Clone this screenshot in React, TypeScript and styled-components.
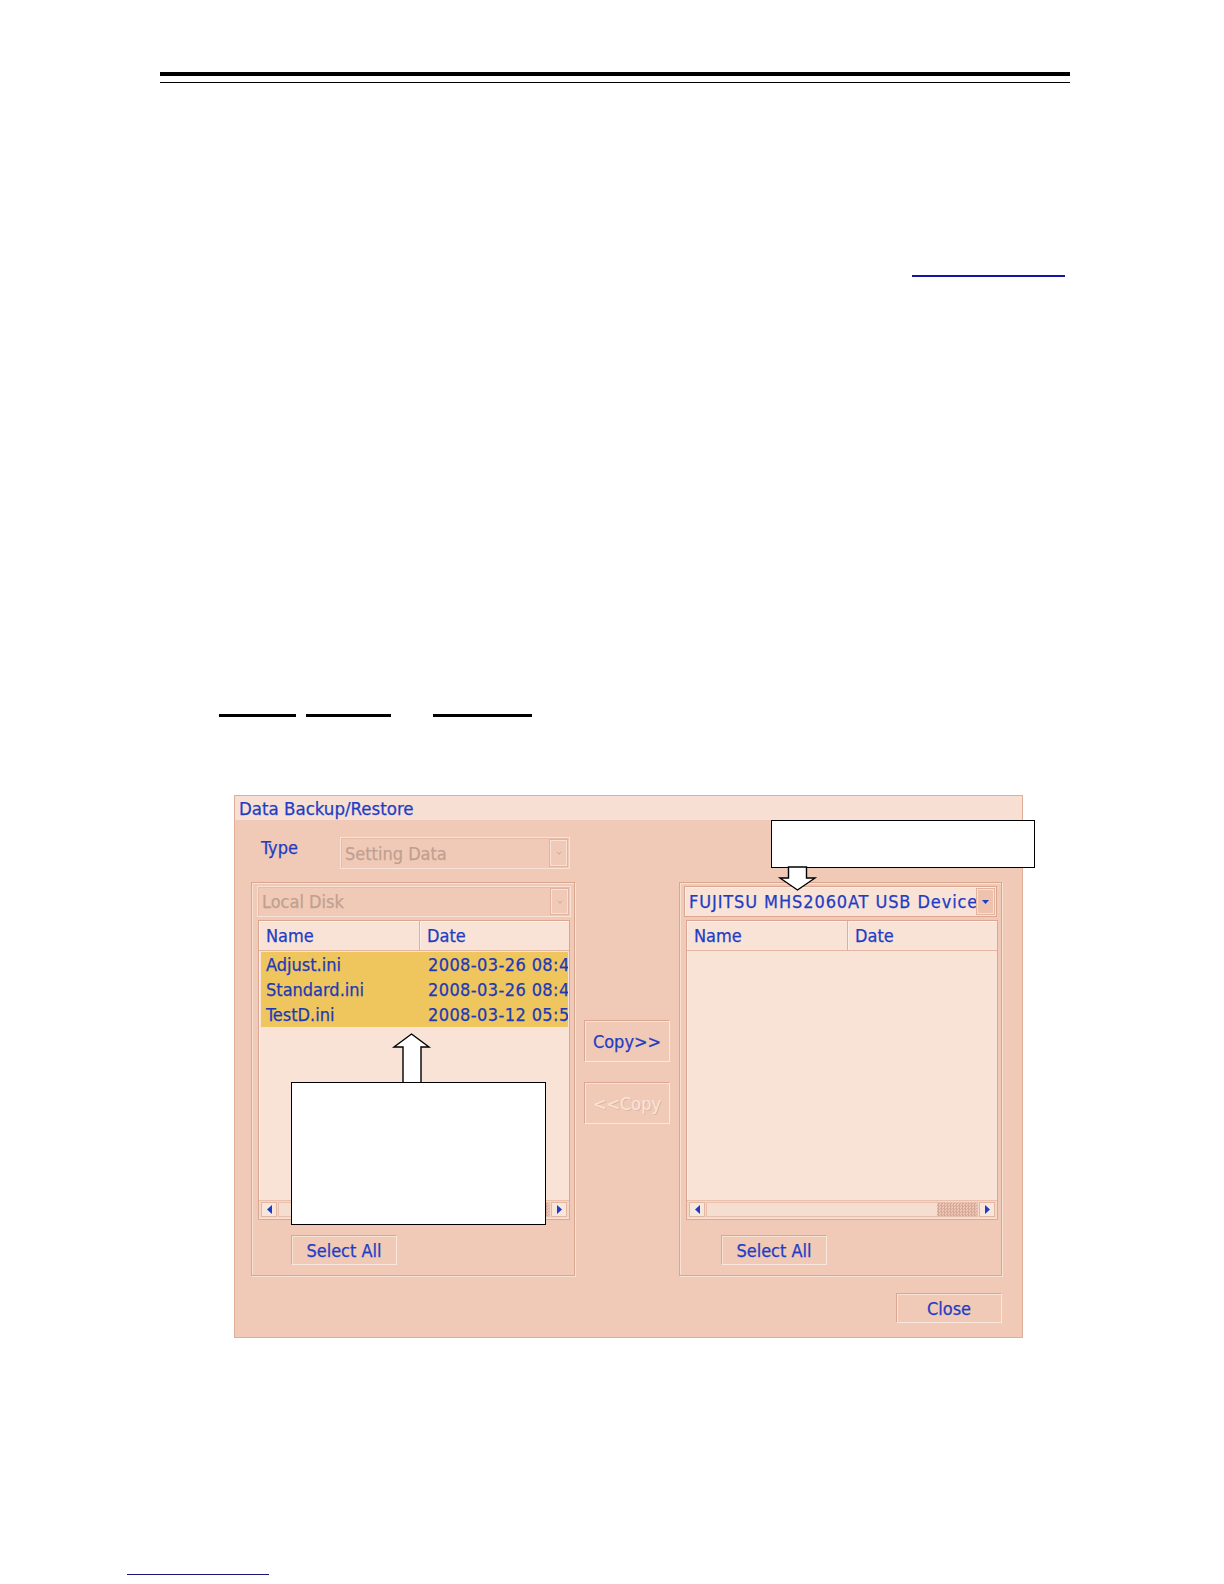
import React from "react";
import styled, { createGlobalStyle } from "styled-components";

const GlobalStyle = createGlobalStyle`
  html, body { margin: 0; padding: 0; background: #ffffff; }
  body { font-family: "DejaVu Sans", "Liberation Sans", sans-serif; }
  * { box-sizing: border-box; }
`;

const BLUE = "#1f3dc4";
const UI_FONT = `"DejaVu Sans Condensed", "DejaVu Sans", "Liberation Sans", sans-serif`;

const Page = styled.div`
  width: 1224px;
  min-height: 1584px;
  display: flex;
  flex-direction: column;
  align-items: flex-start;
  background: #ffffff;
`;

const HeaderRule = styled.div`
  margin: 72px 0 0 160px;
  width: 910px;
  height: 11px;
  border-top: 4px solid #000;
  border-bottom: 1px solid #000;
`;

const LinkLine = styled.div`
  margin: 192px 0 0 912px;
  width: 153px;
  height: 2px;
  background: #1414a6;
`;

const UnderlineRow = styled.div`
  margin-top: 437px;
  padding-left: 219px;
  display: flex;
`;

const Segment = styled.div<{ $w: number; $gap?: number }>`
  width: ${(p) => p.$w}px;
  margin-left: ${(p) => p.$gap ?? 0}px;
  height: 3px;
  background: #000;
`;

const FooterLine = styled.div`
  margin: 236px 0 0 127px;
  width: 142px;
  height: 1px;
  background: #16167c;
`;

const Dialog = styled.div`
  position: relative;
  margin: 78px 0 0 234px;
  width: 789px;
  height: 543px;
  background: #f0cab6;
  border: 1px solid #dfae98;
  display: flex;
  flex-direction: column;
  font-family: ${UI_FONT};
  font-size: 18px;
  color: ${BLUE};
  -webkit-text-stroke: 0.25px currentColor;
`;

const TitleBar = styled.div`
  height: 24px;
  background: #f7e0d3;
  padding-left: 4px;
  display: flex;
  align-items: center;
  font-size: 18.5px;
  color: ${BLUE};
`;

const Body = styled.div`
  flex: 1;
  padding: 17px 20px 14px 16px;
  display: flex;
  flex-direction: column;
`;

const TypeRow = styled.div`
  display: flex;
  height: 32px;
`;

const TypeLabel = styled.div`
  width: 79px;
  margin: 1px 0 0 10px;
  line-height: 20px;
  color: ${BLUE};
`;

const Combo = styled.div<{ $w: number; $h: number; $disabled?: boolean; $ml?: number; $mt?: number }>`
  width: ${(p) => p.$w}px;
  height: ${(p) => p.$h}px;
  margin: ${(p) => p.$mt ?? 0}px 0 0 ${(p) => p.$ml ?? 0}px;
  flex-shrink: 0;
  display: flex;
  align-items: stretch;
  padding: 2px;
  background: ${(p) => (p.$disabled ? "#f0cab6" : "#f8e3d6")};
  border: 1px solid ${(p) => (p.$disabled ? "#f8e2d7" : "#dca792")};
  box-shadow: ${(p) => (p.$disabled ? "inset 1px 1px 0 #e6bba7" : "inset 1px 1px 0 #fbeee6")};
  color: ${(p) => (p.$disabled ? "#c0a092" : BLUE)};
`;

const ComboText = styled.div<{ $spacing?: number }>`
  flex: 1;
  padding-left: 2px;
  display: flex;
  align-items: center;
  white-space: nowrap;
  overflow: hidden;
  letter-spacing: ${(p) => p.$spacing ?? 0}px;
`;

const ComboButton = styled.div<{ $disabled?: boolean }>`
  width: 17px;
  flex-shrink: 0;
  display: flex;
  align-items: center;
  justify-content: center;
  background: ${(p) => (p.$disabled ? "#f0cab6" : "#eec2ad")};
  border: 1px solid #f8e2d7;
  box-shadow: 0 0 0 1px #e2b39f;
`;

const MainRow = styled.div`
  margin-top: 13px;
  height: 394px;
  display: flex;
  gap: 9px;
`;

const GroupBox = styled.div<{ $w: number }>`
  width: ${(p) => p.$w}px;
  height: 100%;
  border: 1px solid #d9a690;
  box-shadow: inset 1px 1px 0 #f8e2d6, 1px 1px 0 #f8e2d6;
  display: flex;
  flex-direction: column;
  align-items: flex-start;
`;

const List = styled.div`
  margin: 3px 0 0 6px;
  width: 312px;
  height: 300px;
  flex-shrink: 0;
  background: #f8e3d6;
  border: 1px solid #dba792;
  box-shadow: inset 1px 1px 0 #fbeee7;
  display: flex;
  flex-direction: column;
  overflow: hidden;
`;

const ListHeader = styled.div`
  display: flex;
  height: 30px;
  flex-shrink: 0;
  border-bottom: 1px solid #e4b5a1;
  box-shadow: inset 0 1px 0 #fdf3ed;
`;

const HeaderCell = styled.div<{ $w?: number }>`
  ${(p) => (p.$w ? `width: ${p.$w}px;` : "flex: 1;")}
  padding-left: 7px;
  display: flex;
  align-items: center;
  color: ${BLUE};
  ${(p) => (p.$w ? "border-right: 1px solid #e0ae99; box-shadow: 1px 0 0 #fcefe8;" : "")}
`;

const Rows = styled.div`
  flex: 1;
  padding: 1px 1px 0 2px;
  display: flex;
  flex-direction: column;
`;

const Row = styled.div`
  height: 25px;
  flex-shrink: 0;
  display: flex;
  background: #efc65e;
  color: #1c39b8;
  white-space: nowrap;
  overflow: hidden;
`;

const Cell = styled.div<{ $w?: number }>`
  ${(p) => (p.$w ? `width: ${p.$w}px; flex-shrink: 0;` : "flex: 1; letter-spacing: 0.4px;")}
  padding-left: ${(p) => (p.$w ? 5 : 7)}px;
  display: flex;
  align-items: center;
  overflow: hidden;
`;

const ScrollBar = styled.div`
  height: 18px;
  margin: 0 0 1px 0;
  padding: 1px 2px;
  flex-shrink: 0;
  display: flex;
  gap: 1px;
  background: #f3d7c9;
  border-top: 1px solid #e8c0ad;
`;

const ScrollArrow = styled.div`
  width: 16px;
  display: flex;
  align-items: center;
  justify-content: center;
  background: #f9e6db;
  border: 1px solid #e4b7a3;
`;

const Track = styled.div`
  flex: 1;
  display: flex;
  justify-content: flex-end;
  border: 1px solid #e8c0ad;
  background: #f5ddd0;
`;

const Thumb = styled.div<{ $w: number }>`
  width: ${(p) => p.$w}px;
  background: repeating-conic-gradient(#d7a797 0 25%, #ebc8b7 0 50%) 0 0 / 3px 3px;
`;

const Button = styled.button<{ $w: number; $h: number; $disabled?: boolean; $ml?: number; $mt?: number }>`
  width: ${(p) => p.$w}px;
  height: ${(p) => p.$h}px;
  margin: ${(p) => p.$mt ?? 0}px 0 0 ${(p) => p.$ml ?? 0}px;
  flex-shrink: 0;
  padding: 0;
  font-family: ${UI_FONT};
  font-size: 18px;
  -webkit-text-stroke: ${(p) => (p.$disabled ? "0" : "0.25px currentColor")};
  background: #f0cab6;
  color: ${(p) => (p.$disabled ? "#f8e4da" : BLUE)};
  text-shadow: ${(p) => (p.$disabled ? "1px 1px 0 #e2b6a3" : "none")};
  border: 1px solid;
  border-color: #dba792 #f9e6dc #f9e6dc #dba792;
  box-shadow: inset 1px 1px 0 #f8e1d5;
  display: flex;
  align-items: center;
  justify-content: center;
  white-space: nowrap;
`;

const Middle = styled.div`
  width: 86px;
  padding-top: 138px;
  display: flex;
  flex-direction: column;
  gap: 20px;
`;

const FooterRow = styled.div`
  margin-top: 17px;
  display: flex;
  justify-content: flex-end;
`;

const Callout = styled.div<{ $left: number; $top: number; $w: number; $h: number }>`
  position: absolute;
  left: ${(p) => p.$left}px;
  top: ${(p) => p.$top}px;
  width: ${(p) => p.$w}px;
  height: ${(p) => p.$h}px;
  background: #ffffff;
  border: 1.5px solid #000;
`;

const ArrowSvg = styled.svg<{ $left: number; $top: number }>`
  position: absolute;
  left: ${(p) => p.$left}px;
  top: ${(p) => p.$top}px;
  overflow: visible;
`;

const LeftTri = () => (
  <svg width="5" height="9" viewBox="0 0 5 9">
    <path d="M5 0 L0 4.5 L5 9 Z" fill={BLUE} />
  </svg>
);
const RightTri = () => (
  <svg width="5" height="9" viewBox="0 0 5 9">
    <path d="M0 0 L5 4.5 L0 9 Z" fill={BLUE} />
  </svg>
);
const DownTri = () => (
  <svg width="7" height="4" viewBox="0 0 7 4">
    <path d="M0 0 H7 L3.5 4 Z" fill={BLUE} />
  </svg>
);
const DisabledDown = () => (
  <svg width="6" height="4" viewBox="0 0 6 4">
    <path d="M1 0.8 L3 3.2 L5 0.8" stroke="#c9a898" strokeWidth="1" fill="none" />
  </svg>
);

type FileRow = { name: string; date: string };

const files: FileRow[] = [
  { name: "Adjust.ini", date: "2008-03-26 08:47" },
  { name: "Standard.ini", date: "2008-03-26 08:47" },
  { name: "TestD.ini", date: "2008-03-12 05:53" },
];

const FileList: React.FC<{ rows: FileRow[] }> = ({ rows }) => (
  <List>
    <ListHeader>
      <HeaderCell $w={161}>Name</HeaderCell>
      <HeaderCell>Date</HeaderCell>
    </ListHeader>
    <Rows>
      {rows.map((r) => (
        <Row key={r.name}>
          <Cell $w={160}>{r.name}</Cell>
          <Cell>{r.date}</Cell>
        </Row>
      ))}
    </Rows>
    <ScrollBar>
      <ScrollArrow>
        <LeftTri />
      </ScrollArrow>
      <Track>
        <Thumb $w={40} />
      </Track>
      <ScrollArrow>
        <RightTri />
      </ScrollArrow>
    </ScrollBar>
  </List>
);

export default function App() {
  return (
    <>
      <GlobalStyle />
      <Page>
        <HeaderRule />
        <LinkLine />
        <UnderlineRow>
          <Segment $w={77} />
          <Segment $w={85} $gap={10} />
          <Segment $w={99} $gap={42} />
        </UnderlineRow>
        <Dialog>
          <TitleBar>Data Backup/Restore</TitleBar>
          <Body>
            <TypeRow>
              <TypeLabel>Type</TypeLabel>
              <Combo $w={230} $h={32} $disabled>
                <ComboText>Setting Data</ComboText>
                <ComboButton $disabled>
                  <DisabledDown />
                </ComboButton>
              </Combo>
            </TypeRow>
            <MainRow>
              <GroupBox $w={327}>
                <Combo $w={314} $h={31} $disabled $ml={5} $mt={3}>
                  <ComboText>Local Disk</ComboText>
                  <ComboButton $disabled>
                    <DisabledDown />
                  </ComboButton>
                </Combo>
                <FileList rows={files} />
                <Button $w={106} $h={30} $ml={39} $mt={15}>
                  Select All
                </Button>
              </GroupBox>
              <Middle>
                <Button $w={86} $h={42}>
                  Copy&gt;&gt;
                </Button>
                <Button $w={86} $h={42} $disabled>
                  &lt;&lt;Copy
                </Button>
              </Middle>
              <GroupBox $w={326}>
                <Combo $w={313} $h={31} $ml={4} $mt={3}>
                  <ComboText $spacing={0.9}>FUJITSU MHS2060AT USB Device</ComboText>
                  <ComboButton>
                    <DownTri />
                  </ComboButton>
                </Combo>
                <FileList rows={[]} />
                <Button $w={106} $h={30} $ml={41} $mt={15}>
                  Select All
                </Button>
              </GroupBox>
            </MainRow>
            <FooterRow>
              <Button $w={106} $h={30}>
                Close
              </Button>
            </FooterRow>
          </Body>

          <Callout $left={536} $top={24} $w={264} $h={48} />
          <ArrowSvg $left={543} $top={71} width={40} height={25} viewBox="0 0 40 25">
            <polygon
              points="10.5,0 28.5,0 28.5,11 37,11 19.5,23 2,11 10.5,11"
              fill="#fff"
              stroke="#000"
              strokeWidth="1.4"
              strokeLinejoin="miter"
            />
          </ArrowSvg>

          <ArrowSvg $left={158} $top={237} width={38} height={50} viewBox="0 0 38 50">
            <polygon
              points="18.5,1 36,14 28,14 28,50 10,50 10,14 1,14"
              fill="#fff"
              stroke="#000"
              strokeWidth="1.4"
              strokeLinejoin="miter"
            />
          </ArrowSvg>
          <Callout $left={56} $top={286} $w={255} $h={143} />
        </Dialog>
        <FooterLine />
      </Page>
    </>
  );
}
